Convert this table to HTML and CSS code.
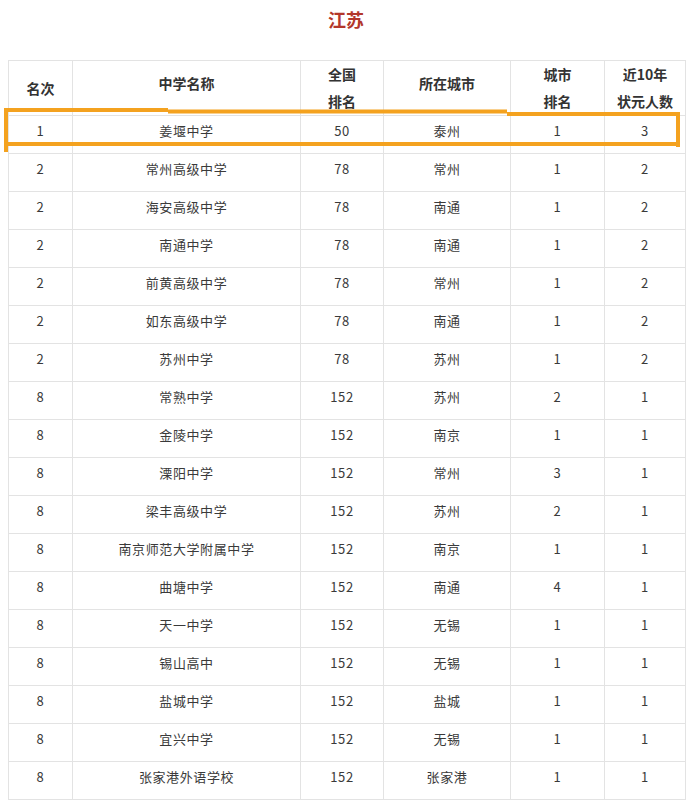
FILE: index.html
```html
<!DOCTYPE html>
<html lang="zh-CN">
<head>
<meta charset="utf-8">
<title>江苏</title>
<link rel="stylesheet" href="styles.css">
</head>
<body>
<div class="page">
  <h1 class="title">江苏</h1>
  <table class="rank">
    <colgroup>
      <col class="c1"><col class="c2"><col class="c3"><col class="c4"><col class="c5"><col class="c6">
    </colgroup>
    <thead>
      <tr class="head">
        <th>名次</th>
        <th class="raise">中学名称</th>
        <th>全国<br>排名</th>
        <th class="raise">所在城市</th>
        <th>城市<br>排名</th>
        <th>近10年<br>状元人数</th>
      </tr>
    </thead>
    <tbody>
      <tr><td>1</td><td>姜堰中学</td><td>50</td><td>泰州</td><td>1</td><td>3</td></tr>
      <tr><td>2</td><td>常州高级中学</td><td>78</td><td>常州</td><td>1</td><td>2</td></tr>
      <tr><td>2</td><td>海安高级中学</td><td>78</td><td>南通</td><td>1</td><td>2</td></tr>
      <tr><td>2</td><td>南通中学</td><td>78</td><td>南通</td><td>1</td><td>2</td></tr>
      <tr><td>2</td><td>前黄高级中学</td><td>78</td><td>常州</td><td>1</td><td>2</td></tr>
      <tr><td>2</td><td>如东高级中学</td><td>78</td><td>南通</td><td>1</td><td>2</td></tr>
      <tr><td>2</td><td>苏州中学</td><td>78</td><td>苏州</td><td>1</td><td>2</td></tr>
      <tr><td>8</td><td>常熟中学</td><td>152</td><td>苏州</td><td>2</td><td>1</td></tr>
      <tr><td>8</td><td>金陵中学</td><td>152</td><td>南京</td><td>1</td><td>1</td></tr>
      <tr><td>8</td><td>溧阳中学</td><td>152</td><td>常州</td><td>3</td><td>1</td></tr>
      <tr><td>8</td><td>梁丰高级中学</td><td>152</td><td>苏州</td><td>2</td><td>1</td></tr>
      <tr><td>8</td><td>南京师范大学附属中学</td><td>152</td><td>南京</td><td>1</td><td>1</td></tr>
      <tr><td>8</td><td>曲塘中学</td><td>152</td><td>南通</td><td>4</td><td>1</td></tr>
      <tr><td>8</td><td>天一中学</td><td>152</td><td>无锡</td><td>1</td><td>1</td></tr>
      <tr><td>8</td><td>锡山高中</td><td>152</td><td>无锡</td><td>1</td><td>1</td></tr>
      <tr><td>8</td><td>盐城中学</td><td>152</td><td>盐城</td><td>1</td><td>1</td></tr>
      <tr><td>8</td><td>宜兴中学</td><td>152</td><td>无锡</td><td>1</td><td>1</td></tr>
      <tr><td>8</td><td>张家港外语学校</td><td>152</td><td>张家港</td><td>1</td><td>1</td></tr>
    </tbody>
  </table>
  <svg class="mark" width="692" height="806" viewBox="0 0 692 806" aria-hidden="true">
    <g fill="none" stroke="#f4a21f" stroke-width="4" stroke-linecap="butt">
      <path d="M4 110 L168 110"/>
      <path d="M168 111.5 L507 111.5"/>
      <path d="M507 114 L680 114"/>
      <path d="M678 112 L678 147"/>
      <path d="M6 144 L680 144"/>
      <path d="M6 108 L6 152"/>
    </g>
  </svg>
</div>
</body>
</html>
```

FILE: styles.css
```css
html, body {
  margin: 0;
  padding: 0;
  background: #ffffff;
}

.page {
  position: relative;
  width: 692px;
  height: 806px;
  padding: 8px;
  box-sizing: border-box;
  overflow: hidden;
  font-family: "Noto Sans CJK SC", "Noto Sans", sans-serif;
  color: #333333;
}

.title {
  margin: 0;
  height: 52px;
  font-size: 18px;
  line-height: 22px;
  font-weight: bold;
  color: #b3372b;
  text-align: center;
}

.rank {
  border-collapse: collapse;
  table-layout: fixed;
  width: 677px;
}

.c1 { width: 64px; }
.c2 { width: 228px; }
.c3 { width: 83px; }
.c4 { width: 127px; }
.c5 { width: 94px; }
.c6 { width: 81px; }

.rank th,
.rank td {
  border: 1px solid #e3e3e3;
  text-align: center;
  vertical-align: middle;
  padding: 0;
}

.rank .head {
  height: 55px;
}

.rank th {
  font-size: 14px;
  line-height: 27px;
  font-weight: bold;
  color: #333333;
}

.rank th.raise {
  padding-bottom: 10px;
}

.rank td {
  height: 29px;
  padding-bottom: 8px;
  font-size: 13px;
  line-height: 20px;
  letter-spacing: 0.6px;
  color: #3a3a3a;
}

.mark {
  position: absolute;
  left: 0;
  top: 0;
  pointer-events: none;
}
```
